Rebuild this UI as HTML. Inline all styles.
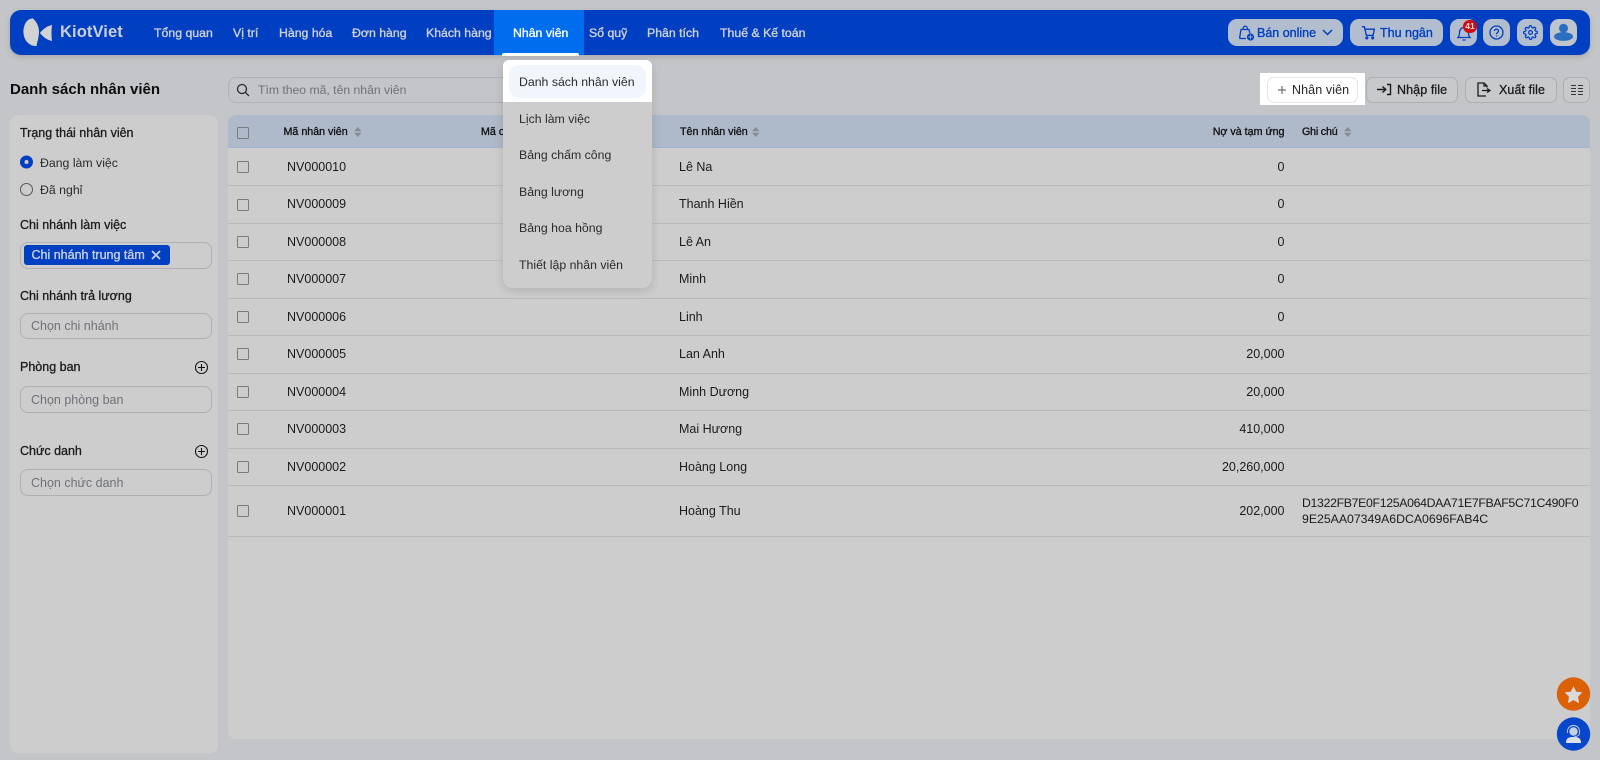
<!DOCTYPE html>
<html lang="vi">
<head>
<meta charset="utf-8">
<title>Danh sách nhân viên</title>
<style>
html,body{margin:0;padding:0;width:1600px;height:760px;overflow:hidden;background:#c3c5c8;font-family:"Liberation Sans",sans-serif;color:#1b1b1d}
#p{position:absolute;left:0;top:0;width:1600px;height:760px;overflow:hidden;filter:blur(.3px)}
.a,.t{position:absolute}
.t{white-space:nowrap;line-height:16px;font-size:12.5px}
.m{-webkit-text-stroke:.3px currentColor}
#nav{left:10px;top:10px;width:1580px;height:45px;background:#003fc2;border-radius:11px;box-shadow:0 2px 6px rgba(0,0,0,.15)}
.n{font-size:12.3px;color:#d0d2d8;top:24.5px;-webkit-text-stroke:.35px currentColor}
.nb{background:#b2bdcd;border-radius:9px;top:19px;height:27px}
.bt{color:#003fc2;font-size:12.5px;top:24.5px;-webkit-text-stroke:.35px currentColor}
.box{border:1px solid #adb0b5;border-radius:8px;box-sizing:border-box;left:20px;width:192px}
.ph{color:#6e7178;font-size:12.5px;left:31px}
.lb{left:20px;font-size:12.5px;color:#1b1b1d}
.hd{font-size:10.7px;top:123.5px;color:#141416;-webkit-text-stroke:.35px currentColor}
.cb{left:236.5px;width:12px;height:12px;margin-top:-.5px;box-sizing:border-box;border:1.3px solid #777c7c;border-radius:1.5px}
.ln{left:228px;width:1362px;height:1px;background:#bbbbbc}
.c1{left:287px}.c2{left:679px}.c3{right:315.5px}
.tb{top:77px;height:26px;border:1px solid #abaeb2;border-radius:7px;box-sizing:border-box;background:#c8c9cb}
.mi{left:519px;font-size:12.3px;color:#2a2b2e}
svg{position:absolute;overflow:visible}
</style>
</head>
<body>
<div id="p">
  <!-- nav -->
  <div class="a" id="nav"></div>
  <svg style="left:0;top:0" width="60" height="60"><path fill="#d2d2d2" d="M33 18.500C26.500 18 23 26 23.500 33C24 41 30 46.500 36.500 46C37.500 41 39 36.500 39 32C39 27 37 22 33 18.500Z"/><path fill="#d2d2d2" d="M52 25C47 26 43 29 40 33C43 37 47 40 52 41C51.300 36 51.300 30 52 25Z"/></svg>
  <span class="t" style="left:60px;top:22px;line-height:20px;font-size:16.500px;font-weight:bold;color:#cccfd6;letter-spacing:.1px">KiotViet</span>
  <span class="t n" style="left:154px">Tổng quan</span>
  <span class="t n" style="left:233px">Vị trí</span>
  <span class="t n" style="left:279px">Hàng hóa</span>
  <span class="t n" style="left:352px">Đơn hàng</span>
  <span class="t n" style="left:426px">Khách hàng</span>
  <div class="a" style="left:494px;top:10px;width:90px;height:45px;background:#006cee"></div>
  <div class="a" style="left:502px;top:52.500px;width:77px;height:3px;background:#fff;border-radius:2px 2px 0 0"></div>
  <span class="t n" style="left:513px;color:#fff">Nhân viên</span>
  <span class="t n" style="left:589px">Sổ quỹ</span>
  <span class="t n" style="left:647px">Phân tích</span>
  <span class="t n" style="left:720px">Thuế &amp; Kế toán</span>

  <div class="a nb" style="left:1228px;width:115px"></div>
  <svg style="left:1238px;top:24px" width="18" height="18" fill="none" stroke="#003fc2" stroke-width="1.300"><path d="M1.500 14.500 3 5.500H11L11.800 9M5 5.500C5 1 9.500 1 9.500 5.500M1.500 14.500H8"/><circle cx="12.500" cy="13" r="3.600" fill="#003fc2" stroke="none"/><path d="M10 13H15M12.500 10.500V15.500" stroke="#b2bdcd" stroke-width=".8"/></svg>
  <span class="t bt" style="left:1257px">Bán online</span>
  <svg style="left:1322px;top:29px" width="12" height="8" fill="none" stroke="#003fc2" stroke-width="1.500"><path d="M1 1 5.500 5.500 10 1"/></svg>
  <div class="a nb" style="left:1350px;width:93px"></div>
  <svg style="left:1361px;top:25px" width="15" height="15" viewBox="0 0 18 18" fill="none" stroke="#003fc2" stroke-width="1.600"><path d="M1 2H4L6.500 12.500H14.500L16 5H4.700"/><circle cx="7" cy="15.500" r="1.100"/><circle cx="14" cy="15.500" r="1.100"/></svg>
  <span class="t bt" style="left:1380px">Thu ngân</span>
  <div class="a nb" style="left:1450px;width:27px"></div>
  <svg style="left:1456px;top:25px" width="16" height="16" fill="none" stroke="#003fc2" stroke-width="1.300"><path d="M2 12.500C3.500 11 3.500 9.500 3.500 7.500C3.500 4.500 5.500 2.500 8 2.500C10.500 2.500 12.500 4.500 12.500 7.500C12.500 9.500 12.500 11 14 12.500ZM6.500 15H9.500"/></svg>
  <div class="a" style="left:1463px;top:19.500px;width:14px;height:13px;border-radius:7px;background:#d0080f;color:#e6e0e0;font-size:8.500px;font-weight:bold;text-align:center;line-height:13px">41</div>
  <div class="a nb" style="left:1483px;width:27px"></div>
  <svg style="left:1489px;top:25px" width="15" height="15" fill="none" stroke="#003fc2" stroke-width="1.300"><circle cx="7.500" cy="7.500" r="6.500"/><path d="M5.500 6C5.500 3.500 9.500 3.500 9.500 6C9.500 7.500 7.500 7.500 7.500 9.200M7.500 10.500V11.500"/></svg>
  <div class="a nb" style="left:1517px;width:26px"></div>
  <svg style="left:1523px;top:25px" width="15" height="15" viewBox="0 0 24 24" fill="none" stroke="#003fc2" stroke-width="2"><circle cx="12" cy="12" r="3"/><path d="M19.400 15a1.650 1.650 0 0 0 .33 1.820l.06.06a2 2 0 1 1-2.830 2.830l-.06-.06a1.650 1.650 0 0 0-2.800 1.170V21a2 2 0 1 1-4 0v-.09a1.650 1.650 0 0 0-2.800-1.170l-.06.06a2 2 0 1 1-2.830-2.830l.06-.06a1.650 1.650 0 0 0-1.170-2.800H3a2 2 0 1 1 0-4h.09a1.650 1.650 0 0 0 1.170-2.800l-.06-.06a2 2 0 1 1 2.830-2.830l.06.06a1.650 1.650 0 0 0 2.800-1.170V3a2 2 0 1 1 4 0v.09a1.650 1.650 0 0 0 2.800 1.170l.06-.06a2 2 0 1 1 2.830 2.830l-.06.06a1.650 1.650 0 0 0 1.170 2.800H21a2 2 0 1 1 0 4h-.09a1.650 1.650 0 0 0-1.510 1z"/></svg>
  <div class="a nb" style="left:1550px;width:27px;background:#bfc4cd"></div>
  <svg style="left:1550px;top:19px" width="27" height="27"><circle cx="13.500" cy="9.300" r="4.500" fill="#2a6ec2"/><ellipse cx="13.500" cy="17.500" rx="9.500" ry="4.400" fill="#2a6ec2"/></svg>

  <!-- title + toolbar -->
  <span class="t" style="left:10px;top:82px;font-size:15px;font-weight:bold;color:#0d0d0f">Danh sách nhân viên</span>
  <div class="a" style="left:228px;top:77px;width:300px;height:26px;box-sizing:border-box;border:1px solid #afb2b6;border-radius:8px"></div>
  <svg style="left:236px;top:83px" width="14" height="14" fill="none" stroke="#2a2b2e" stroke-width="1.300"><circle cx="6" cy="6" r="4.500"/><path d="M9.500 9.500 13 13"/></svg>
  <span class="t" style="left:258px;top:82px;font-size:12.200px;color:#6e7178">Tìm theo mã, tên nhân viên</span>

  <div class="a" style="left:1260px;top:73px;width:105px;height:32px;background:#fff"></div>
  <div class="a" style="left:1267px;top:77px;width:91px;height:26px;box-sizing:border-box;background:#fff;border:1px solid #e4e5e7;border-radius:7px"></div>
  <svg style="left:1277px;top:85px" width="10" height="10" stroke="#555" stroke-width="1"><path d="M5 1V9M1 5H9"/></svg>
  <span class="t" style="left:1292px;top:82px;font-size:12.500px;color:#26272a;letter-spacing:.1px">Nhân viên</span>
  <div class="a tb" style="left:1366px;width:92px"></div>
  <svg style="left:1376px;top:82px" width="16" height="16" fill="none" stroke="#1b1b1d" stroke-width="1.400"><path d="M1 7.500H9M6.500 4.500 9.800 7.500 6.500 10.500M11 2.500H14.500V12.500H11"/></svg>
  <span class="t m" style="left:1397px;top:82px;font-size:12.500px;letter-spacing:.1px">Nhập file</span>
  <div class="a tb" style="left:1465px;width:92px"></div>
  <svg style="left:1476px;top:82px" width="16" height="16" fill="none" stroke="#1b1b1d" stroke-width="1.300"><path d="M10 14H2V1H8L11 4V5.500M8 1V4H11M6 8.500H13M11 6.500 14 8.500 11 10.500"/></svg>
  <span class="t m" style="left:1499px;top:82px;font-size:12.500px;letter-spacing:.1px">Xuất file</span>
  <div class="a tb" style="left:1563px;width:27px"></div>
  <svg style="left:1571px;top:84px" width="12" height="12" stroke="#333" stroke-width="1"><path d="M0 1.500H5M7 1.500H12M0 4.500H5M7 4.500H12M0 7.500H5M7 7.500H12M0 10.500H5M7 10.500H12"/></svg>

  <!-- sidebar -->
  <div class="a" style="left:10px;top:115px;width:208px;height:638px;background:#cdcdcd;border-radius:8px"></div>
  <span class="t lb m" style="top:125px">Trạng thái nhân viên</span>
  <svg style="left:20px;top:155px" width="14" height="42"><circle cx="6.500" cy="7" r="6.500" fill="#003fc2"/><circle cx="6.500" cy="7" r="2" fill="#cdcdcd"/><circle cx="6.500" cy="34.500" r="6" fill="none" stroke="#55585d" stroke-width="1"/></svg>
  <span class="t" style="left:40px;top:154.500px;font-size:12.300px;color:#2a2b2e">Đang làm việc</span>
  <span class="t" style="left:40px;top:182px;font-size:12.300px;color:#2a2b2e">Đã nghỉ</span>
  <span class="t lb m" style="top:217px">Chi nhánh làm việc</span>
  <div class="a box" style="top:241.500px;height:27.500px"></div>
  <div class="a" style="left:23.500px;top:245px;width:146.500px;height:20px;background:#003fc2;border-radius:3px"></div>
  <span class="t" style="left:31.500px;top:247px;font-size:12.500px;color:#cacfd9;-webkit-text-stroke:.35px currentColor">Chi nhánh trung tâm</span>
  <svg style="left:151px;top:250px" width="10" height="10" stroke="#cacfd9" stroke-width="1.800"><path d="M1 1 9 9M9 1 1 9"/></svg>
  <span class="t lb m" style="top:288px">Chi nhánh trả lương</span>
  <div class="a box" style="top:312.500px;height:26.500px"></div>
  <span class="t ph" style="top:318px">Chọn chi nhánh</span>
  <span class="t lb m" style="top:358.500px">Phòng ban</span>
  <svg style="left:195px;top:361px" width="13" height="13" fill="none" stroke="#151518" stroke-width="1.100"><circle cx="6.500" cy="6.500" r="6"/><path d="M6.500 3V10M3 6.500H10"/></svg>
  <div class="a box" style="top:386px;height:26.500px"></div>
  <span class="t ph" style="top:391.500px">Chọn phòng ban</span>
  <span class="t lb m" style="top:443px">Chức danh</span>
  <svg style="left:195px;top:444.500px" width="13" height="13" fill="none" stroke="#151518" stroke-width="1.100"><circle cx="6.500" cy="6.500" r="6"/><path d="M6.500 3V10M3 6.500H10"/></svg>
  <div class="a box" style="top:469px;height:26.500px"></div>
  <span class="t ph" style="top:474.500px">Chọn chức danh</span>

  <!-- table -->
  <div class="a" style="left:228px;top:115px;width:1362px;height:624px;background:#cdcdcd;border-radius:8px"></div>
  <div class="a" style="left:228px;top:115px;width:1362px;height:33px;background:#aebac9;border-bottom:1px solid #a0b6d4;box-sizing:border-box;border-radius:8px 8px 0 0"></div>
  <div class="a cb" style="top:127.500px"></div>
  <span class="t hd" style="left:283.500px">Mã nhân viên</span>
  <span class="t hd" style="left:481px">Mã chấm công</span>
  <span class="t hd" style="left:680px">Tên nhân viên</span>
  <span class="t hd" style="right:315.500px">Nợ và tạm ứng</span>
  <span class="t hd" style="left:1302px;letter-spacing:-.2px">Ghi chú</span>
  <svg style="left:353.500px;top:126.500px" width="7.500" height="10.500" viewBox="0 0 7 10" fill="#858b93"><path d="M3.500 0 7 4H0ZM0 5.500H7L3.500 9.500Z"/></svg>
  <svg style="left:752px;top:126.500px" width="7.500" height="10.500" viewBox="0 0 7 10" fill="#858b93"><path d="M3.500 0 7 4H0ZM0 5.500H7L3.500 9.500Z"/></svg>
  <svg style="left:1344px;top:126.500px" width="7.500" height="10.500" viewBox="0 0 7 10" fill="#858b93"><path d="M3.500 0 7 4H0ZM0 5.500H7L3.500 9.500Z"/></svg>

  <div class="a ln" style="top:185px"></div><div class="a ln" style="top:222.500px"></div><div class="a ln" style="top:260px"></div><div class="a ln" style="top:297.500px"></div><div class="a ln" style="top:335px"></div><div class="a ln" style="top:372.500px"></div><div class="a ln" style="top:410px"></div><div class="a ln" style="top:447.500px"></div><div class="a ln" style="top:485px"></div><div class="a ln" style="top:536px"></div>

  <div class="a cb" style="top:161.500px"></div><span class="t c1" style="top:158.500px">NV000010</span><span class="t c2" style="top:158.500px">Lê Na</span><span class="t c3" style="top:158.500px">0</span>
  <div class="a cb" style="top:199px"></div><span class="t c1" style="top:196px">NV000009</span><span class="t c2" style="top:196px">Thanh Hiền</span><span class="t c3" style="top:196px">0</span>
  <div class="a cb" style="top:236px"></div><span class="t c1" style="top:233.500px">NV000008</span><span class="t c2" style="top:233.500px">Lê An</span><span class="t c3" style="top:233.500px">0</span>
  <div class="a cb" style="top:273.500px"></div><span class="t c1" style="top:271px">NV000007</span><span class="t c2" style="top:271px">Minh</span><span class="t c3" style="top:271px">0</span>
  <div class="a cb" style="top:311px"></div><span class="t c1" style="top:308.500px">NV000006</span><span class="t c2" style="top:308.500px">Linh</span><span class="t c3" style="top:308.500px">0</span>
  <div class="a cb" style="top:348.500px"></div><span class="t c1" style="top:346px">NV000005</span><span class="t c2" style="top:346px">Lan Anh</span><span class="t c3" style="top:346px">20,000</span>
  <div class="a cb" style="top:386px"></div><span class="t c1" style="top:383.500px">NV000004</span><span class="t c2" style="top:383.500px">Minh Dương</span><span class="t c3" style="top:383.500px">20,000</span>
  <div class="a cb" style="top:423.500px"></div><span class="t c1" style="top:421px">NV000003</span><span class="t c2" style="top:421px">Mai Hương</span><span class="t c3" style="top:421px">410,000</span>
  <div class="a cb" style="top:461px"></div><span class="t c1" style="top:458.500px">NV000002</span><span class="t c2" style="top:458.500px">Hoàng Long</span><span class="t c3" style="top:458.500px">20,260,000</span>
  <div class="a cb" style="top:505.500px"></div><span class="t c1" style="top:503px">NV000001</span><span class="t c2" style="top:503px">Hoàng Thu</span><span class="t c3" style="top:503px">202,000</span>
  <span class="t" style="left:1302px;top:494.500px;font-size:12.300px;letter-spacing:-.33px">D1322FB7E0F125A064DAA71E7FBAF5C71C490F0</span>
  <span class="t" style="left:1302px;top:511px;font-size:12.300px;letter-spacing:-.02px">9E25AA07349A6DCA0696FAB4C</span>

  <!-- dropdown -->
  <div class="a" style="left:503px;top:60px;width:149px;height:228px;background:#cdcdcd;border-radius:10px;box-shadow:0 3px 10px rgba(0,0,0,.13)"></div>
  <div class="a" style="left:503px;top:60px;width:149px;height:42px;background:#fff;border-radius:6px 6px 0 0"></div>
  <div class="a" style="left:509px;top:65px;width:137px;height:33px;background:#f1f6fd;border-radius:10px"></div>
  <span class="t mi" style="top:74px">Danh sách nhân viên</span>
  <span class="t mi" style="top:110.500px">Lịch làm việc</span>
  <span class="t mi" style="top:147px">Bảng chấm công</span>
  <span class="t mi" style="top:184px">Bảng lương</span>
  <span class="t mi" style="top:220px">Bảng hoa hồng</span>
  <span class="t mi" style="top:257px">Thiết lập nhân viên</span>

  <!-- floating -->
  <svg style="left:1555px;top:676px" width="38" height="78">
    <circle cx="18.500" cy="18" r="16.700" fill="#dc6006"/>
    <path d="M18.500 11 21 16 26.500 16.700 22.600 20.600 23.600 26.500 18.500 23.700 13.400 26.500 14.400 20.600 10.500 16.700 16 16Z" fill="#dadada" stroke="#dadada" stroke-width=".8" stroke-linejoin="round"/>
    <circle cx="18.500" cy="58" r="16.700" fill="#0747cc"/>
    <circle cx="18.500" cy="55.500" r="4.200" fill="#c8d0e2"/>
    <path d="M12.500 57V55.500C12.500 47.500 24.500 47.500 24.500 55.500V57M24.500 57C24.500 59.500 22 60.500 19.500 60.500" fill="none" stroke="#c8d0e2" stroke-width=".9"/>
    <path d="M11 67C11 61.500 14.500 61 18.500 61C22.500 61 26 61.500 26 67Z" fill="#dadfe9"/>
  </svg>
</div>
</body>
</html>
